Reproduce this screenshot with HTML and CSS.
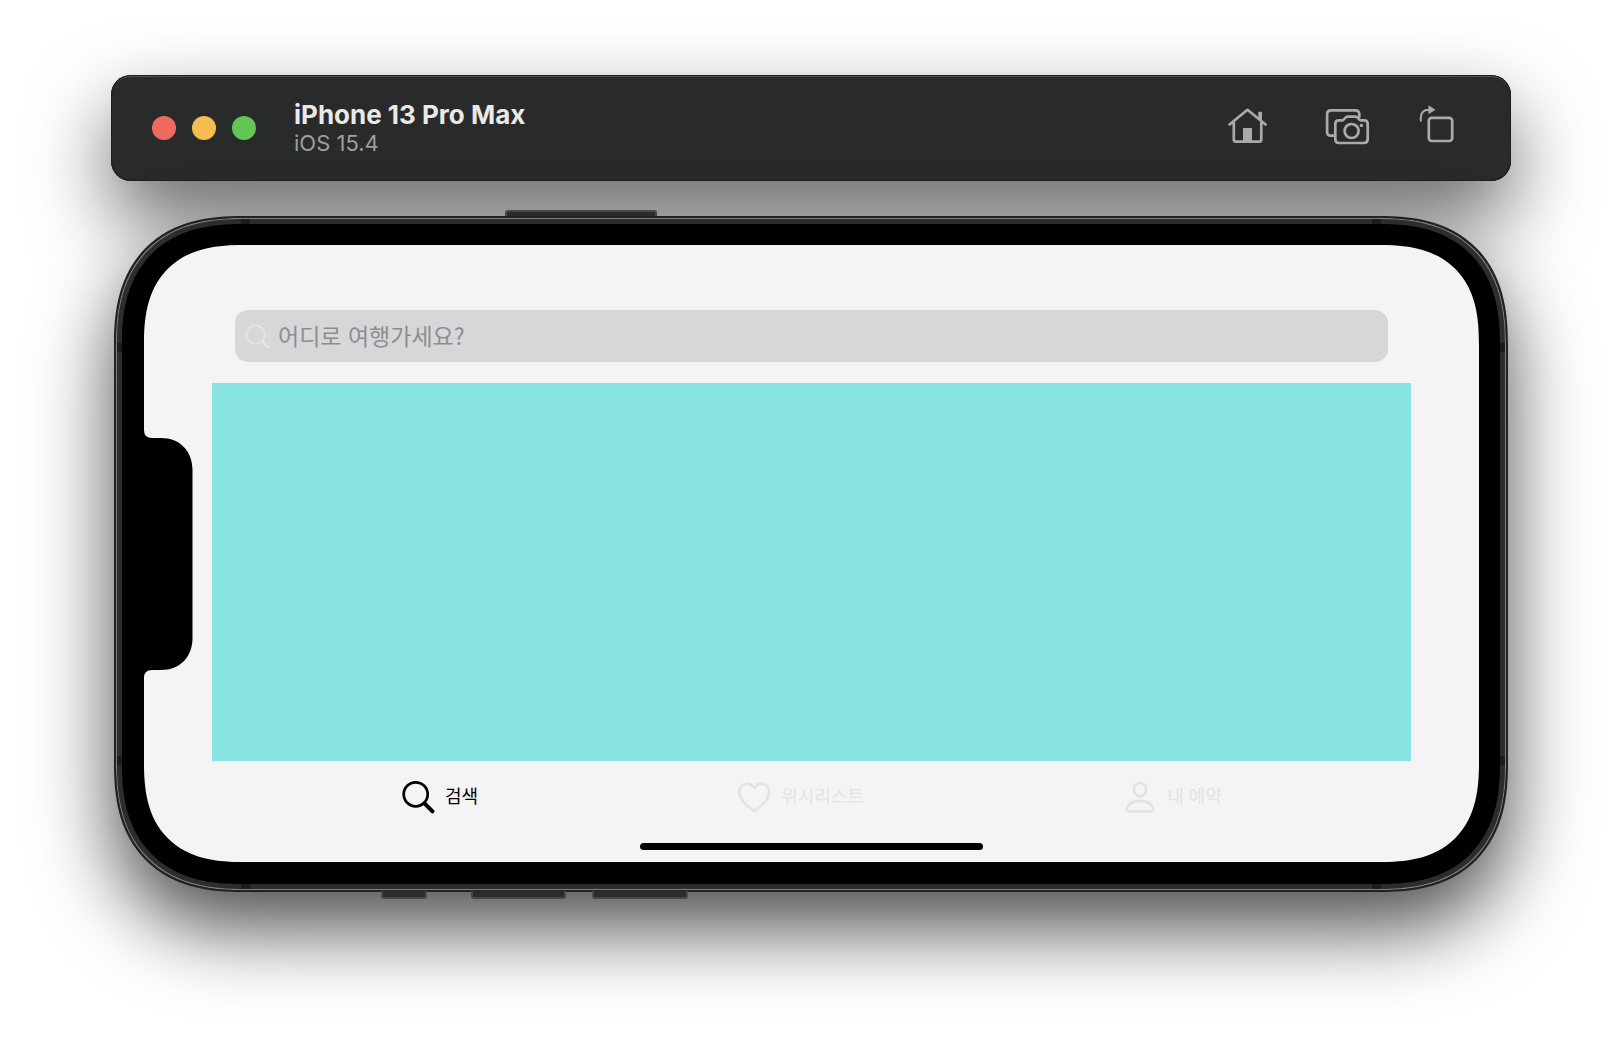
FILE: index.html
```html
<!DOCTYPE html>
<html lang="ko">
<head>
    <meta charset="UTF-8">
    <meta name="viewport" content="width=device-width, initial-scale=1.0">
    <title>iPhone 13 Pro Max</title>
    <link rel="stylesheet" href="styles.css">
</head>
<body>

<div class="simulator">
    <header class="titlebar">
        <div class="lights">
            <button class="light red" aria-label="Close"></button>
            <button class="light yellow" aria-label="Minimize"></button>
            <button class="light green" aria-label="Zoom"></button>
        </div>
        <div class="device">
            <h1>iPhone 13 Pro Max</h1>
            <p>iOS 15.4</p>
        </div>
        <div class="tools">
            <button aria-label="Home">
                <svg width="49" height="48" viewBox="0 -4 49 48">
                    <path d="M1.5 16.5 19.5 1.8 37.5 16.5M5.8 14V31.5Q5.8 33.7 8 33.7H31Q33.3 33.7 33.3 31.5V14"/>
                    <path class="solid" d="M15 20H24V34H15ZM30.3 4.5Q30.3 3.7 31 3.7H33.3Q34 3.7 34 4.5V15L30.3 11.5Z"/>
                </svg>
            </button>
            <button aria-label="Screenshot">
                <svg width="45" height="48" viewBox="0 -4 45 48">
                    <path d="M10 27.7H6Q2.1 27.7 2.1 23.7V6.3Q2.1 2.3 6.1 2.3H30Q34.3 2.3 34.3 6.3V9"/>
                    <path d="M14 12.3H17.5C19.5 12.3 19.5 8.7 22.5 8.7H30.5C33.5 8.7 33.5 12.3 35.5 12.3H39Q42.7 12.3 42.7 16V31.3Q42.7 35 39 35H14Q10.3 35 10.3 31.3V16Q10.3 12.3 14 12.3Z"/>
                    <circle cx="26.6" cy="23" r="7"/>
                    <circle class="solid" cx="36.4" cy="17.4" r="1.7"/>
                </svg>
            </button>
            <button aria-label="Rotate">
                <svg width="36" height="48" viewBox="0 0 36 48">
                    <rect x="10.8" y="13.8" width="23.4" height="23.2" rx="3"/>
                    <path class="thin" d="M2.8 16.7V14Q2.8 5.8 11 5.7"/>
                    <path class="solid" d="M10.5 1.2 17.5 5.7 10.5 10.2Z"/>
                </svg>
            </button>
        </div>
    </header>

    <div class="phone">
        <span class="side power"></span>
        <span class="side mute"></span>
        <span class="side volume-up"></span>
        <span class="side volume-down"></span>

        <div class="bezel">
            <main class="screen">
                <svg class="notch" width="49" height="248" viewBox="0 0 49 248">
                    <path d="M0 0Q0 8 8 8H17C36 8 48.5 21 48.5 40V208C48.5 227 36 240 17 240H8Q0 240 0 248Z"/>
                </svg>

                <label class="search">
                    <svg width="25" height="25" viewBox="0 0 34 34">
                        <circle cx="14.5" cy="14.5" r="12.4"/>
                        <path class="handle" d="M23.5 23.5 31.7 31.7"/>
                    </svg>
                    <input type="text" placeholder="어디로 여행가세요?" aria-label="검색어">
                </label>

                <section class="content"></section>

                <nav class="tabs">
                    <button class="tab active">
                        <svg width="34" height="34" viewBox="0 0 34 34">
                            <circle cx="14.7" cy="14.3" r="12"/>
                            <path class="handle" d="M23.5 23.3 31.5 31.3"/>
                        </svg>
                        <span>검색</span>
                    </button>
                    <button class="tab">
                        <svg width="34" height="34" viewBox="0 0 34 34">
                            <path d="M17.3 31C15 29.5 10 26.5 6.2 21.5C3.8 18.5 2.3 15.5 2.3 12C2.3 7 5.6 3.9 9.8 3.9C13.2 3.9 15.6 5.5 17.3 8.2C19 5.5 21.4 3.9 24.8 3.9C29 3.9 32.1 7 32.1 12C32.1 15.5 30.7 18.5 28.3 21.5C24.5 26.5 19.5 29.5 17.3 31Z"/>
                        </svg>
                        <span>위시리스트</span>
                    </button>
                    <button class="tab">
                        <svg width="34" height="34" viewBox="0 0 34 34">
                            <ellipse cx="17" cy="9.6" rx="6" ry="6.7"/>
                            <path d="M5.5 31.3Q3.9 31.3 3.9 29.5C4.4 24 10 20.8 17 20.8C24 20.8 29.6 24 30.1 29.5Q30.1 31.3 28.5 31.3Z"/>
                        </svg>
                        <span>내 예약</span>
                    </button>
                </nav>

                <div class="home-indicator"></div>
            </main>
        </div>
    </div>
</div>

</body>
</html>
```
FILE: styles.css
```css
* {
    box-sizing: border-box;
}
body {
    margin: 0;
    padding: 75px 111px;
    min-height: 100vh;
    background-color: #fff;
    font-family: Inter, "Noto Sans CJK KR", sans-serif;
}
button {
    padding: 0;
    border: none;
    background: none;
    font-family: inherit;
    cursor: pointer;
}
svg {
    display: block;
    flex: none;
    fill: none;
    stroke: currentColor;
    stroke-width: 2.7;
    stroke-linecap: round;
    stroke-linejoin: round;
}

.simulator {
    display: flex;
    flex-direction: column;
    gap: 35px;
}

/* title bar */
.titlebar {
    display: flex;
    align-items: center;
    height: 106px;
    padding: 0 57px 0 41px;
    border-radius: 20px;
    background-color: #292b2a;
    box-shadow: inset 0 0 0 1px #1c1d1d, inset 0 2px 0 #505251, 0 36px 80px rgba(0, 0, 0, 0.6);
}
.lights {
    display: flex;
    gap: 16px;
    margin-right: 38px;
}
.light {
    width: 24px;
    height: 24px;
    border-radius: 50%;
}
.red {
    background-color: #ed6a5f;
}
.yellow {
    background-color: #f5bf4f;
}
.green {
    background-color: #62c655;
}
.device {
    padding-top: 2px;
}
.device h1 {
    margin: 0;
    font-size: 26px;
    line-height: 29px;
    font-weight: 700;
    color: #e9e9e9;
}
.device p {
    margin: 0;
    font-size: 22px;
    line-height: 29px;
    color: #9d9e9e;
}
.tools {
    display: flex;
    gap: 48px;
    margin-left: auto;
    color: #a9aaaa;
}
.tools button {
    color: inherit;
}
.solid {
    fill: currentColor;
    stroke: none;
}
.thin {
    stroke-width: 2;
}

/* phone body, with the antenna bands as stripes under the bezel */
.phone {
    position: relative;
    margin: 0 3px;
    padding: 6px;
    border: 2px solid #222;
    border-radius: 106px;
    background-color: #2d2d2d;
    background-image:
        linear-gradient(#1c1c1c, #1c1c1c),
        linear-gradient(#1c1c1c, #1c1c1c),
        linear-gradient(#1c1c1c, #1c1c1c),
        linear-gradient(#1c1c1c, #1c1c1c);
    background-position: left 125px top 0, right 125px top 0, left 0 top 125px, left 0 bottom 125px;
    background-size: 9px 100%, 9px 100%, 100% 9px, 100% 9px;
    background-repeat: no-repeat;
    box-shadow: inset 0 0 0 1px #808080, 0 36px 80px rgba(0, 0, 0, 0.7);
}
.side {
    position: absolute;
    height: 8px;
    border: 2px solid #484848;
    background-color: #2b2b2b;
}
.power {
    top: -8px;
    left: 389px;
    width: 152px;
    height: 6px;
    border-bottom: none;
    border-radius: 3px 3px 0 0;
}
.mute,
.volume-up,
.volume-down {
    bottom: -9px;
    border-top: none;
    border-radius: 0 0 3px 3px;
}
.mute {
    left: 265px;
    width: 46px;
}
.volume-up {
    left: 355px;
    width: 95px;
}
.volume-down {
    left: 476px;
    width: 96px;
}
.bezel {
    padding: 21px 21px 22px 22px;
    border-radius: 98px;
    background-color: #000;
}

/* app */
.screen {
    position: relative;
    display: flex;
    flex-direction: column;
    padding: 65px 68px 12px 68px;
    border-radius: 80px;
    background-color: #f4f4f7;
}

/* continuous corners where the browser can draw them */
@supports (corner-shape: superellipse(1.4)) {
    .phone {
        border-radius: 128px;
        corner-shape: superellipse(1.28);
    }
    .bezel {
        border-radius: 120px;
        corner-shape: superellipse(1.28);
    }
    .screen {
        border-radius: 100px;
        corner-shape: superellipse(1.35);
    }
}
.notch {
    position: absolute;
    top: 50%;
    left: 0;
    transform: translateY(-50%);
    fill: #000;
    stroke: none;
}
.search {
    display: flex;
    align-items: center;
    gap: 8px;
    height: 52px;
    margin: 0 23px;
    padding: 0 10px;
    border-radius: 13px;
    background-color: #d7d7d9;
    color: #e3e3e8;
}
.search input {
    flex: 1;
    min-width: 0;
    padding: 0 0 2px;
    border: none;
    outline: none;
    background: none;
    font-family: "Noto Sans CJK KR", sans-serif;
    font-size: 23px;
    color: #000;
}
.search input::placeholder {
    color: #8d8d8f;
    opacity: 1;
}
.handle {
    stroke-width: 4;
}
.content {
    min-height: 378px;
    margin-top: 21px;
    background-color: #87e4e1;
}
.tabs {
    display: flex;
    justify-content: space-between;
    padding: 19px 189px 29px;
}
.tab {
    display: flex;
    align-items: center;
    gap: 10px;
    height: 34px;
    font-family: "Noto Sans CJK KR", sans-serif;
    font-size: 18px;
    line-height: 24px;
    color: #e3e3e5;
}
.tab.active {
    color: #000;
}
.tab svg {
    stroke-width: 2.7;
}
.tab span {
    padding-bottom: 4px;
}
.home-indicator {
    align-self: center;
    width: 343px;
    height: 7px;
    border-radius: 4px;
    background-color: #000;
}
```
